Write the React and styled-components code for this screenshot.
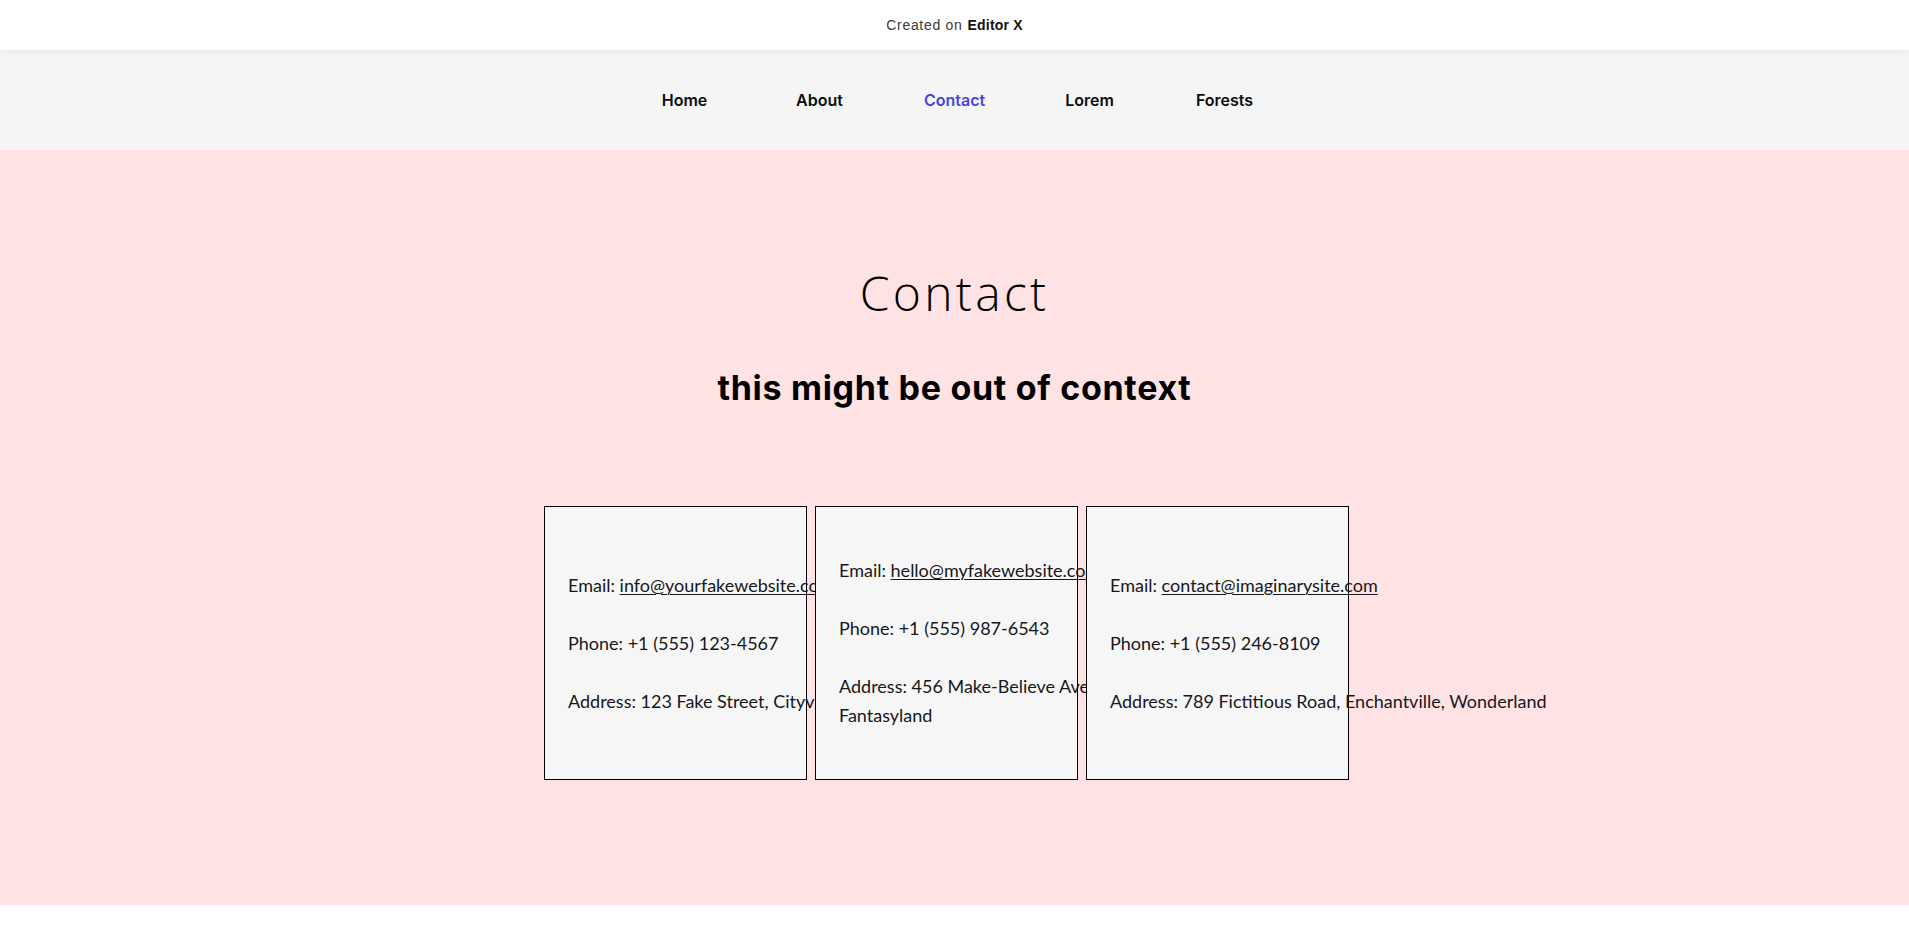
import React from "react";
import styled, { createGlobalStyle } from "styled-components";

const Global = createGlobalStyle`
  html, body { margin: 0; padding: 0; background: #ffffff; }
  body { font-family: "Liberation Sans", Arial, sans-serif; }
  * { box-sizing: border-box; }
`;

const Page = styled.div`
  min-height: 940px;
  background: #ffffff;
`;

const TopBar = styled.div`
  position: relative;
  z-index: 2;
  height: 50px;
  display: flex;
  align-items: center;
  justify-content: center;
  background: #ffffff;
  box-shadow: 0 1px 8px rgba(0, 0, 0, 0.07);
  font-family: "Liberation Sans", Arial, sans-serif;
  font-size: 14px;
  letter-spacing: 0.7px;
  color: #3a3a3a;
`;

const Brand = styled.b`
  font-weight: 700;
  color: #111;
  letter-spacing: 0.2px;
  margin-left: 5px;
`;

const Nav = styled.nav`
  height: 100px;
  display: flex;
  align-items: center;
  justify-content: center;
  background: #f5f5f5;
`;

const NavItem = styled.a`
  width: 135px;
  text-align: center;
  font-family: Inter, "Open Sans", sans-serif;
  font-weight: 600;
  font-size: 16px;
  text-decoration: none;
  color: ${(p) => (p.$active ? "#4545da" : "#0c0c0c")};
`;

const Hero = styled.section`
  background: #ffe2e3;
  padding: 119px 0 125px;
  display: flex;
  flex-direction: column;
  align-items: center;
`;

const Title = styled.h1`
  margin: 0 0 54px;
  font-family: "Open Sans", sans-serif;
  font-weight: 300;
  font-size: 48px;
  line-height: 1;
  letter-spacing: 3.3px;
  color: #000;
`;

const Subtitle = styled.h2`
  margin: 0 0 101px;
  font-family: Inter, "Open Sans", sans-serif;
  font-weight: 700;
  font-size: 34px;
  line-height: 1;
  letter-spacing: 0.7px;
  color: #000;
`;

const Cards = styled.div`
  display: flex;
  gap: 8px;
  padding-right: 16px;
`;

const Card = styled.div`
  isolation: isolate;
  width: 263px;
  height: 274px;
  flex: none;
  border: 1px solid #000;
  background: #f6f6f6;
  display: flex;
  flex-direction: column;
  justify-content: center;
  padding-left: 23px;
`;

const Info = styled.div`
  width: 480px;
  display: flex;
  flex-direction: column;
  gap: 29px;
  font-family: Lato, "Open Sans", sans-serif;
  font-size: 18px;
  line-height: 29px;
  color: #161620;
`;

const Line = styled.p`
  margin: 0;
`;

const Mail = styled.a`
  color: inherit;
  text-decoration: underline;
  text-underline-offset: 2px;
  text-decoration-thickness: 1px;
`;

const Footer = styled.div`
  height: 35px;
  background: #ffffff;
`;

const contacts = [
  {
    email: "info@yourfakewebsite.com",
    phone: "+1 (555) 123-4567",
    address: "123 Fake Street, Cityville, Fakeland",
  },
  {
    email: "hello@myfakewebsite.com",
    phone: "+1 (555) 987-6543",
    address: "456 Make-Believe Avenue, Dreamville City, Fantasyland",
  },
  {
    email: "contact@imaginarysite.com",
    phone: "+1 (555) 246-8109",
    address: "789 Fictitious Road, Enchantville, Wonderland",
  },
];

const links = ["Home", "About", "Contact", "Lorem", "Forests"];

export default function App() {
  return (
    <Page>
      <Global />
      <TopBar>
        Created on <Brand>Editor X</Brand>
      </TopBar>
      <Nav>
        {links.map((l) => (
          <NavItem key={l} href="#" $active={l === "Contact"}>
            {l}
          </NavItem>
        ))}
      </Nav>
      <Hero>
        <Title>Contact</Title>
        <Subtitle>this might be out of context</Subtitle>
        <Cards>
          {contacts.map((c) => (
            <Card key={c.email}>
              <Info>
                <Line>
                  Email: <Mail href="#">{c.email}</Mail>
                </Line>
                <Line>Phone: {c.phone}</Line>
                <Line>Address: {c.address}</Line>
              </Info>
            </Card>
          ))}
        </Cards>
      </Hero>
      <Footer />
    </Page>
  );
}
